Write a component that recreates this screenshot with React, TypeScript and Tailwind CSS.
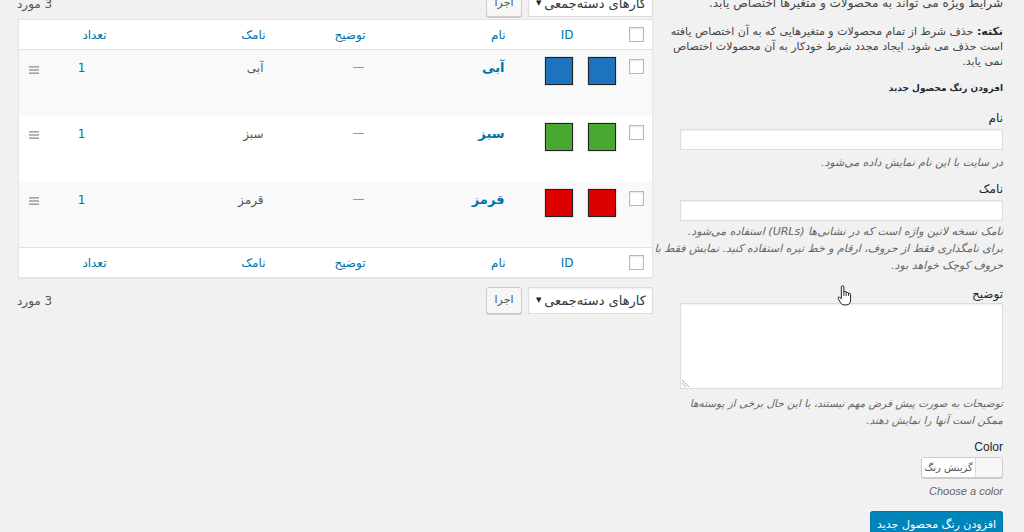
import React from 'react';

type Term = { name: string; slug: string; color: string; count: number };

const terms: Term[] = [
  { name: 'آبی', slug: 'آبی', color: '#1e73be', count: 1 },
  { name: 'سبز', slug: 'سبز', color: '#4aa832', count: 1 },
  { name: 'قرمز', slug: 'قرمز', color: '#dd0000', count: 1 },
];

function Checkbox() {
  return (
    <span className="inline-block w-[15px] h-[15px] border border-[#b4b9be] bg-white shadow-[inset_0_1px_2px_rgba(0,0,0,0.1)] align-top" />
  );
}

function Swatch({ color }: { color: string }) {
  return (
    <span
      className="inline-block w-[28px] h-[28px] border border-[#222] shadow-[0_0_1px_rgba(0,0,0,0.5)] align-top"
      style={{ backgroundColor: color }}
    />
  );
}

function Handle() {
  return (
    <svg width="10" height="8" viewBox="0 0 10 8" className="inline-block">
      <rect x="0" y="0" width="10" height="1.6" fill="#a0a5aa" />
      <rect x="0" y="3.2" width="10" height="1.6" fill="#a0a5aa" />
      <rect x="0" y="6.4" width="10" height="1.6" fill="#a0a5aa" />
    </svg>
  );
}

function BulkActions({ className = '' }: { className?: string }) {
  return (
    <div className={`flex items-center justify-between h-[27px] ${className}`}>
      <div className="flex items-center gap-[6px]">
        <div className="flex items-center justify-between w-[125px] h-[27px] bg-white border border-[#ddd] shadow-[inset_0_1px_2px_rgba(0,0,0,0.07)] pr-[6px] pl-[7px] text-[13px] text-[#32373c]">
          <span>کارهای دسته‌جمعی</span>
          <span className="text-[7px] text-[#222]">▼</span>
        </div>
        <button className="w-[36px] h-[27px] bg-[#f7f7f7] border border-[#ccc] rounded-[3px] shadow-[0_1px_0_#ccc] text-[11px] text-[#555]">
          اجرا
        </button>
      </div>
      <span className="text-[12px] text-[#555] -ml-[2px]">3 مورد</span>
    </div>
  );
}

function HeaderRow({ footer = false }: { footer?: boolean }) {
  const th = `h-[30px] p-0 pr-[8px] align-middle font-normal text-right text-[12px] text-[#0073aa] ${
    footer ? 'border-t border-[#e1e1e1]' : 'border-b border-[#e1e1e1]'
  }`;
  return (
    <tr>
      <th className={`${th} w-[29px]`}>
        <div className="pt-[2px]">
          <Checkbox />
        </div>
      </th>
      <th className={`${th} w-[42px]`} />
      <th className={`${th} w-[68px]`}>ID</th>
      <th className={`${th} w-[140px]`}>نام</th>
      <th className={`${th} w-[100px]`}>توضیح</th>
      <th className={`${th} w-[159px]`}>نامک</th>
      <th className={`${th} w-[65px]`}>تعداد</th>
      <th className={`${th} w-[31px]`} />
    </tr>
  );
}

function TermRow({ term, index }: { term: Term; index: number }) {
  const td = 'p-0 align-top';
  return (
    <tr className={index % 2 === 0 ? 'bg-[#f9f9f9]' : 'bg-white'}>
      <td className={`${td} h-[66px] pr-[8px] pt-[9px]`}>
        <Checkbox />
      </td>
      <td className={`${td} pr-[8px] pt-[7px]`}>
        <Swatch color={term.color} />
      </td>
      <td className={`${td} pr-[9px] pt-[7px]`}>
        <Swatch color={term.color} />
      </td>
      <td className={`${td} pr-[9px] pt-[9px] leading-[18px]`}>
        <span className="text-[13px] font-bold text-[#0073aa]">{term.name}</span>
      </td>
      <td className={`${td} pr-[9px] pt-[8px] leading-[18px] text-[#999]`}>—</td>
      <td className={`${td} pr-[10px] pt-[9px] leading-[18px] text-[12px] text-[#555]`}>{term.slug}</td>
      <td className={`${td} pr-[29px] pt-[9px] leading-[18px] text-[12px] text-[#0073aa]`}>{term.count}</td>
      <td className={`${td} text-center pt-[13px] leading-none`}>
        <Handle />
      </td>
    </tr>
  );
}

function TermsList() {
  return (
    <div className="w-[634px] flex-none">
      <BulkActions className="-mt-[10px]" />
      <table className="mt-[2px] w-[634px] table-fixed border-collapse border border-[#e5e5e5] bg-white shadow-[0_1px_1px_rgba(0,0,0,0.04)]">
        <thead>
          <HeaderRow />
        </thead>
        <tbody>
          {terms.map((t, i) => (
            <TermRow key={t.name} term={t} index={i} />
          ))}
        </tbody>
        <tfoot>
          <HeaderRow footer />
        </tfoot>
      </table>
      <BulkActions className="mt-[9px]" />
    </div>
  );
}

function AddTermForm() {
  const help = 'italic text-[11px] text-[#666]';
  const label = 'text-[12px] leading-[15px] text-[#23282d]';
  return (
    <div className="w-[328px] flex-none text-[12px] text-[#444]">
      <p className="-mt-[4px] leading-[15px] whitespace-nowrap">شرایط ویژه می تواند به محصولات و متغیرها اختصاص یابد.</p>
      <div className="mt-[13px] leading-[15px] text-[11px]">
        <p className="whitespace-nowrap">
          <strong className="text-[#23282d]">نکته:</strong> حذف شرط از تمام محصولات و متغیرهایی که به آن اختصاص یافته
        </p>
        <p className="whitespace-nowrap">است حذف می شود. ایجاد مجدد شرط خودکار به آن محصولات اختصاص</p>
        <p className="whitespace-nowrap">نمی یابد.</p>
      </div>
      <h2 className="mt-[12px] text-[9px] leading-[15px] font-bold text-[#23282d]">افزودن رنگ محصول جدید</h2>

      <div className={`mt-[15px] ${label}`}>نام</div>
      <div className="mt-[3px] w-[323px] h-[21px] bg-white border border-[#ddd] shadow-[inset_0_1px_2px_rgba(0,0,0,0.07)]" />
      <p className={`mt-[5px] leading-[15px] ${help}`}>در سایت با این نام نمایش داده می‌شود.</p>

      <div className={`mt-[12px] ${label}`}>نامک</div>
      <div className="mt-[3px] w-[323px] h-[21px] bg-white border border-[#ddd] shadow-[inset_0_1px_2px_rgba(0,0,0,0.07)]" />
      <div className={`mt-[2px] leading-[17px] ${help}`}>
        <p className="whitespace-nowrap">نامک نسخه لاتین واژه است که در نشانی‌ها (URLs) استفاده می‌شود.</p>
        <p className="whitespace-nowrap">برای نامگذاری فقط از حروف، ارقام و خط تیره استفاده کنید. نمایش فقط با</p>
        <p className="whitespace-nowrap">حروف کوچک خواهد بود.</p>
      </div>

      <div className={`mt-[13px] ${label}`}>توضیح</div>
      <div className="relative mt-[1px] w-[323px] h-[86px] bg-white border border-[#ddd] shadow-[inset_0_1px_2px_rgba(0,0,0,0.07)]">
        <svg width="8" height="8" viewBox="0 0 8 8" className="absolute left-[1px] bottom-[1px]">
          <path d="M0 1 L7 8 M0 4 L4 8" stroke="#999" strokeWidth="0.8" />
        </svg>
      </div>
      <div className="mt-[6px] leading-[17px] italic text-[10.5px] text-[#666]">
        <p className="whitespace-nowrap">توضیحات به صورت پیش فرض مهم نیستند، با این حال برخی از پوسته‌ها</p>
        <p className="whitespace-nowrap">ممکن است آنها را نمایش دهند.</p>
      </div>

      <div className={`mt-[11px] ${label} font-['Liberation_Sans',sans-serif]`}>Color</div>
      <div className="mt-[2px] flex">
        <div className="flex h-[21px] w-[82px] border border-[#ccc] rounded-[3px] bg-[#f7f7f7] shadow-[0_1px_0_#ccc] overflow-hidden">
          <span className="w-[26px] h-full bg-[#f7f7f7]" />
          <span className="flex-1 h-full bg-white border-r border-[#ddd] text-[10px] leading-[19px] text-center text-[#555]">
            گزینش رنگ
          </span>
        </div>
      </div>
      <p className="mt-[6px] italic text-[11px] leading-[15px] text-[#666] font-['Liberation_Sans',sans-serif] text-right" dir="ltr">
        Choose a color
      </p>
      <div className="mt-[12px] flex">
        <button className="h-[28px] px-[6px] bg-[#0085ba] border border-[#0073aa] border-b-[#006799] rounded-[3px] shadow-[0_1px_0_#006799] text-[11px] text-white whitespace-nowrap">
          افزودن رنگ محصول جدید
        </button>
      </div>
    </div>
  );
}

function HandCursor() {
  return (
    <svg width="15" height="21" viewBox="0 0 14 20" className="absolute left-[837px] top-[285px]">
      <path
        d="M4 13 L4 2 Q4 0.8 5.2 0.8 Q6.4 0.8 6.4 2 L6.4 7 Q6.4 6 7.5 6 Q8.6 6 8.6 7 L8.6 7.8 Q8.6 7 9.7 7 Q10.8 7 10.8 8 L10.8 8.8 Q10.8 8 11.8 8 Q12.8 8 12.8 9 L12.8 14 Q12.8 19 8.5 19 L6.5 19 Q4.5 19 3.3 17 L1 13 Q0.5 11.8 1.5 11.6 Q2.4 11.5 3 12.3 Z"
        fill="white"
        stroke="#111"
        strokeWidth="0.9"
      />
      <path d="M6.4 7 L6.4 10.5 M8.6 7.8 L8.6 10.5 M10.8 8.8 L10.8 10.5" stroke="#111" strokeWidth="0.8" />
    </svg>
  );
}

export default function App() {
  return (
    <div
      dir="rtl"
      className="relative w-[1024px] h-[532px] overflow-hidden bg-[#f1f1f1] font-['DejaVu_Sans',sans-serif] text-[12px] text-[#444]"
    >
      <div className="flex gap-[22px] pr-[21px] pl-[19px]">
        <AddTermForm />
        <TermsList />
      </div>
      <HandCursor />
    </div>
  );
}
